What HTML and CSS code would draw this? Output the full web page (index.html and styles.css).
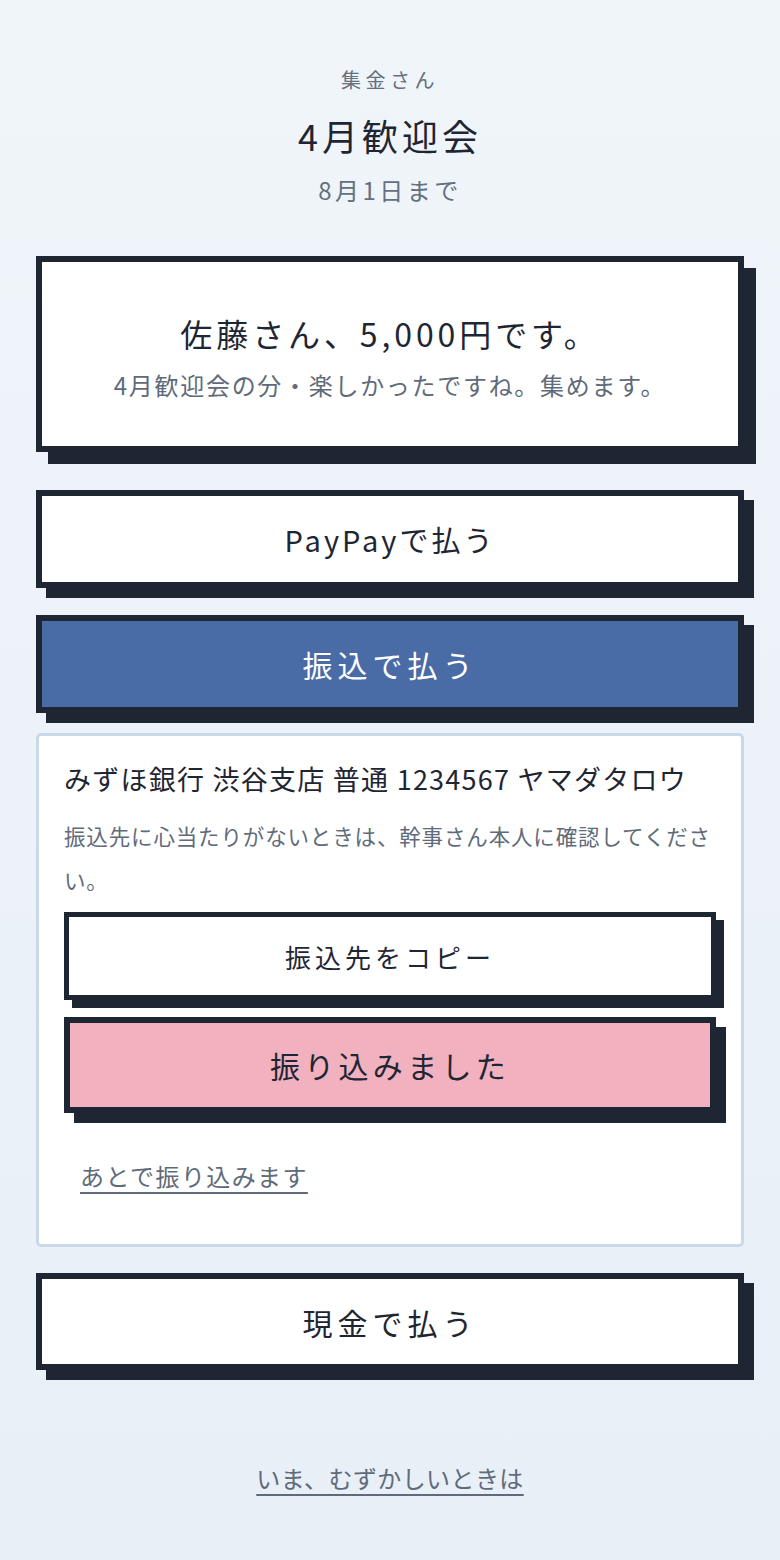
FILE: index.html
```html
<!DOCTYPE html>
<html lang="ja">
<head>
<meta charset="utf-8">
<title>集金さん</title>
<link rel="stylesheet" href="styles.css">
</head>
<body>
<main class="page">
  <header class="head">
    <p class="brand">集金さん</p>
    <h1 class="event">4月歓迎会</h1>
    <p class="due">8月1日まで</p>
  </header>

  <section class="amount-card">
    <p class="amount">佐藤さん、5,000円です。</p>
    <p class="amount-note">4月歓迎会の分・楽しかったですね。集めます。</p>
  </section>

  <button class="pay-btn pay-btn--paypay">PayPayで払う</button>
  <button class="pay-btn pay-btn--blue">振込で払う</button>

  <section class="bank-panel">
    <p class="bank-info">みずほ銀行 渋谷支店 普通 1234567 ヤマダタロウ</p>
    <p class="bank-note">振込先に心当たりがないときは、幹事さん本人に確認してください。</p>
    <button class="sub-btn">振込先をコピー</button>
    <button class="sub-btn sub-btn--pink">振り込みました</button>
    <a class="later-link" href="#">あとで振り込みます</a>
  </section>

  <button class="pay-btn pay-btn--cash">現金で払う</button>

  <footer class="foot">
    <a class="foot-link" href="#">いま、むずかしいときは</a>
  </footer>
</main>
</body>
</html>
```

FILE: styles.css
```css
* { box-sizing: border-box; }

html, body {
  margin: 0;
  padding: 0;
}

body {
  min-height: 1560px;
  background: linear-gradient(180deg, #f0f5fa 0%, #e8eff7 100%);
  font-family: "Noto Sans CJK JP", "Noto Sans", sans-serif;
  color: #1f2633;
}

.page {
  padding: 66px 36px 60px;
  display: flex;
  flex-direction: column;
}

p { margin: 0; }

.head {
  display: flex;
  flex-direction: column;
  align-items: center;
}

.brand {
  font-size: 20px;
  line-height: 28px;
  letter-spacing: 4.5px;
  color: #64707f;
}

.event {
  margin: 17px 0 0;
  font-size: 36px;
  line-height: 48px;
  font-weight: 400;
  letter-spacing: 4px;
  color: #1f2633;
}

.due {
  margin-top: 15px;
  font-size: 24px;
  line-height: 32px;
  letter-spacing: 3.5px;
  color: #64707f;
}

.amount-card {
  margin-top: 50px;
  height: 196px;
  background: #fff;
  border: 6px solid #1f2633;
  box-shadow: 12px 12px 0 #1f2633;
  display: flex;
  flex-direction: column;
  align-items: center;
  padding-top: 49px;
}

.amount {
  font-size: 32px;
  line-height: 44px;
  letter-spacing: 3.9px;
}

.amount-note {
  margin-top: 14px;
  font-size: 24px;
  line-height: 32px;
  letter-spacing: 1.7px;
  color: #5f6b7a;
}

button {
  font-family: inherit;
  cursor: pointer;
}

.pay-btn {
  display: flex;
  align-items: center;
  justify-content: center;
  width: 100%;
  height: 98px;
  margin-top: 38px;
  background: #fff;
  border: 6px solid #1f2633;
  box-shadow: 10px 10px 0 #1f2633;
  font-size: 30px;
  letter-spacing: 5px;
  color: #1f2633;
  padding: 0;
}

.pay-btn--paypay {
  font-size: 29px;
  letter-spacing: 3px;
}

.pay-btn--blue {
  margin-top: 27px;
  background: #4a6ca6;
  color: #fff;
}

.pay-btn--cash {
  margin-top: 26px;
  height: 97px;
}

.bank-panel {
  margin-top: 20px;
  background: #fff;
  border: 3px solid #cad9e8;
  border-radius: 5px;
  padding: 25px 25px 51px;
  display: flex;
  flex-direction: column;
  align-items: flex-start;
}

.bank-info {
  font-size: 27px;
  line-height: 36px;
  letter-spacing: 1.25px;
  color: #1f2633;
}

.bank-note {
  margin-top: 17px;
  font-size: 21.5px;
  line-height: 44px;
  letter-spacing: 0.85px;
  color: #5f6b7a;
}

.sub-btn {
  display: flex;
  align-items: center;
  justify-content: center;
  width: 100%;
  height: 88px;
  margin-top: 10px;
  background: #fff;
  border: 5px solid #1f2633;
  box-shadow: 8px 8px 0 #1f2633;
  font-size: 26px;
  letter-spacing: 4px;
  color: #1f2633;
  padding: 0;
}

.sub-btn--pink {
  margin-top: 17px;
  height: 96px;
  border-width: 6px;
  box-shadow: 10px 10px 0 #1f2633;
  background: #f2b1be;
  font-size: 30px;
  letter-spacing: 4.3px;
}

.later-link {
  margin-top: 46px;
  margin-left: 16px;
  font-size: 24px;
  line-height: 34px;
  letter-spacing: 1.4px;
  color: #5f6b7a;
  text-decoration: underline;
  text-decoration-thickness: 2px;
  text-underline-offset: 6px;
}

.foot {
  margin-top: 91px;
  display: flex;
  justify-content: center;
}

.foot-link {
  font-size: 24px;
  line-height: 34px;
  letter-spacing: 0.4px;
  color: #5f6b7a;
  text-decoration: underline;
  text-decoration-thickness: 2px;
  text-underline-offset: 6px;
}
```
